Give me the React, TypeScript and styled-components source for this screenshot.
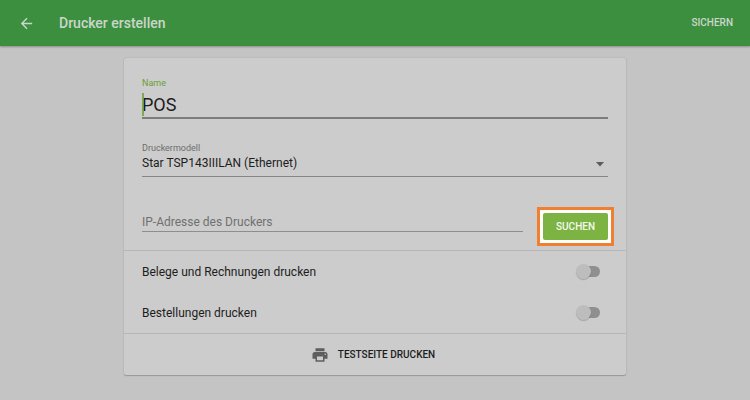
import React, { useState } from "react";
import styled, { createGlobalStyle } from "styled-components";

const GlobalStyle = createGlobalStyle`
  *, *::before, *::after { box-sizing: border-box; }
  body {
    margin: 0;
    background: #c4c4c4;
    color: #1d1d1d;
    font-family: Roboto, "Liberation Sans", sans-serif;
    font-size: 12px;
    line-height: 16px;
  }
  button, input, select { font: inherit; color: inherit; }
`;

const Page = styled.div`
  min-height: 100vh;
  padding-bottom: 24px;
`;

const AppBar = styled.header`
  display: flex;
  align-items: center;
  height: 46px;
  padding: 0 17px 0 18px;
  background: #3d8f40;
  color: #cbd6cb;
  box-shadow: 0 1px 2px rgba(0, 0, 0, 0.3);
`;

const BarButton = styled.button`
  display: flex;
  padding: 0;
  border: 0;
  background: none;
  font-weight: 500;
  font-size: 10px;
  cursor: pointer;
`;

const Title = styled.h1`
  flex: 1;
  margin: 0 0 0 24px;
  font-size: 14px;
  font-weight: 500;
  line-height: 20px;
`;

const Card = styled.form`
  width: calc(100% - 248px);
  margin: 12px auto 0;
  border-radius: 2px;
  background: #cccccc;
  box-shadow: 0 1px 1px rgba(0, 0, 0, 0.2), 0 0 2px rgba(0, 0, 0, 0.14);
`;

const Fields = styled.div`
  padding: 19px 18px 4px;
`;

const Field = styled.div`
  position: relative;
  display: flex;
  flex-direction: column;
`;

const ModelField = styled(Field)`
  margin-top: 23px;
`;

const FieldLabel = styled.label<{ $active?: boolean }>`
  font-size: 9px;
  line-height: 12px;
  color: ${(p) => (p.$active ? "#6a9f35" : "#6c6c6c")};
`;

const NameInput = styled.input`
  width: 100%;
  height: 30px;
  padding: 3px 0 0;
  border: 0;
  border-bottom: 2px solid #7c7c7c;
  border-radius: 0;
  outline: none;
  background: none;
  font-size: 18px;
`;

const Caret = styled.span`
  position: absolute;
  left: 0;
  bottom: 3px;
  width: 2px;
  height: 23px;
  background: #6a9f35;
  opacity: 0.8;
`;

const ModelSelect = styled.select`
  width: 100%;
  height: 23px;
  padding: 0 20px 4px 0;
  border: 0;
  border-bottom: 1px solid #868686;
  border-radius: 0;
  outline: none;
  appearance: none;
  background: none;
`;

const SelectArrow = styled.svg`
  position: absolute;
  right: 4px;
  bottom: 10px;
  pointer-events: none;
`;

const SearchRow = styled.div`
  display: flex;
  align-items: flex-end;
  gap: 14px;
  margin-top: 30px;
`;

const AddressInput = styled.input`
  flex: 1;
  min-width: 0;
  height: 24px;
  margin-bottom: 14px;
  padding: 5px 0 0;
  border: 0;
  border-bottom: 1px solid #8e8e8e;
  border-radius: 0;
  outline: none;
  background: none;
  &::placeholder { color: #707070; opacity: 1; }
`;

const Highlight = styled.div`
  margin-right: -6px;
  padding: 3px;
  border: 3px solid #f08030;
  background: #fff;
`;

const SearchButton = styled.button`
  display: block;
  width: 65px;
  height: 27px;
  padding: 0;
  border: 0;
  border-radius: 2px;
  background: #7cb342;
  color: #f4f9ef;
  font-size: 10px;
  font-weight: 500;
  cursor: pointer;
`;

const Options = styled.div`
  border: solid #b6b6b6;
  border-width: 1px 0;
`;

const OptionRow = styled.label`
  display: flex;
  align-items: center;
  justify-content: space-between;
  height: 41px;
  padding: 0 26px 0 18px;
`;

const Switch = styled.input`
  display: flex;
  align-items: center;
  width: 20px;
  height: 11px;
  margin: 0;
  appearance: none;
  border-radius: 6px;
  background: #8f8f8f;
  cursor: pointer;
  &::before {
    content: "";
    flex: none;
    width: 15px;
    height: 15px;
    margin: 0 -4px;
    border-radius: 50%;
    background: #bdbdbd;
    box-shadow: 0 1px 1px rgba(0, 0, 0, 0.2);
  }
  &:checked { justify-content: flex-end; }
  &:checked::before { background: #7cb342; }
`;

const PrintButton = styled.button`
  display: flex;
  align-items: center;
  justify-content: center;
  gap: 9px;
  width: 100%;
  height: 41px;
  padding: 0 4px 0 0;
  border: 0;
  background: none;
  font-size: 10px;
  font-weight: 500;
  cursor: pointer;
`;

type OptionProps = { label: string };

function Option({ label }: OptionProps) {
  const [on, setOn] = useState(false);
  return (
    <OptionRow>
      {label}
      <Switch type="checkbox" role="switch" checked={on} onChange={() => setOn(!on)} />
    </OptionRow>
  );
}

export default function App() {
  return (
    <Page>
      <GlobalStyle />
      <AppBar>
        <BarButton type="button" aria-label="Zurück">
          <svg width="17" height="17" viewBox="0 0 24 24" fill="currentColor">
            <path d="M20 11H7.83l5.59-5.59L12 4l-8 8 8 8 1.41-1.41L7.83 13H20v-2z" />
          </svg>
        </BarButton>
        <Title>Drucker erstellen</Title>
        <BarButton type="button">SICHERN</BarButton>
      </AppBar>
      <Card onSubmit={(e) => e.preventDefault()}>
        <Fields>
          <Field>
            <FieldLabel htmlFor="name" $active>Name</FieldLabel>
            <NameInput id="name" defaultValue="POS" />
            <Caret />
          </Field>
          <ModelField>
            <FieldLabel htmlFor="model">Druckermodell</FieldLabel>
            <ModelSelect id="model">
              <option>Star TSP143IIILAN (Ethernet)</option>
            </ModelSelect>
            <SelectArrow width="8" height="5" viewBox="0 0 8 5" fill="#5c5c5c">
              <path d="M0 0h8L4 4.5z" />
            </SelectArrow>
          </ModelField>
          <SearchRow>
            <AddressInput aria-label="IP-Adresse des Druckers" placeholder="IP-Adresse des Druckers" />
            <Highlight>
              <SearchButton type="button">SUCHEN</SearchButton>
            </Highlight>
          </SearchRow>
        </Fields>
        <Options>
          <Option label="Belege und Rechnungen drucken" />
          <Option label="Bestellungen drucken" />
        </Options>
        <PrintButton type="button">
          <svg width="18" height="18" viewBox="0 0 24 24" fill="#5e5e5e">
            <path d="M19 8H5c-1.66 0-3 1.34-3 3v6h4v4h12v-4h4v-6c0-1.66-1.34-3-3-3zm-3 11H8v-5h8v5zm3-7c-.55 0-1-.45-1-1s.45-1 1-1 1 .45 1 1-.45 1-1 1zm-1-9H6v4h12V3z" />
          </svg>
          TESTSEITE DRUCKEN
        </PrintButton>
      </Card>
    </Page>
  );
}
